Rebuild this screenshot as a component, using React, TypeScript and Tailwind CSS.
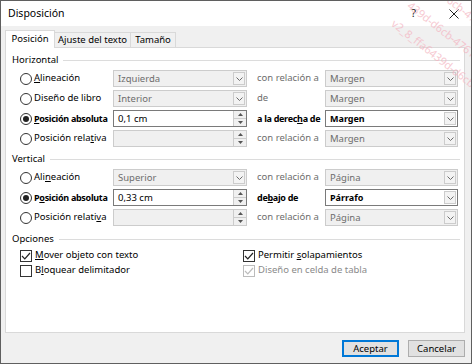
import type { ReactNode } from 'react';

function Chevron() {
  return (
    <svg width="7" height="4" viewBox="0 0 7 4" fill="none">
      <path d="M0.5 0.5 L3.5 3.5 L6.5 0.5" stroke="#6b6b6b" strokeWidth="1" />
    </svg>
  );
}

function Spin() {
  return (
    <span className="flex h-full w-[13px] flex-col border-l border-[#cccccc] bg-[#f0f0f0]">
      <span className="flex flex-1 items-center justify-center border-b border-[#cccccc]">
        <svg width="5" height="3" viewBox="0 0 5 3"><path d="M0 3 L2.5 0 L5 3 Z" fill="#555" /></svg>
      </span>
      <span className="flex flex-1 items-center justify-center">
        <svg width="5" height="3" viewBox="0 0 5 3"><path d="M0 0 L2.5 3 L5 0 Z" fill="#555" /></svg>
      </span>
    </span>
  );
}

function Combo({ value, active, bold }: { value: string; active?: boolean; bold?: boolean }) {
  return (
    <div
      className={
        active
          ? 'flex h-[17px] items-stretch border border-[#7a7a7a] bg-white text-black'
          : 'flex h-[17px] items-stretch border border-[#cccccc] bg-[#f0f0f0] text-[#6d6d6d]'
      }
    >
      <span className={bold ? 'flex-1 pl-[4px] text-[9px] font-bold leading-[15px]' : 'flex-1 pl-[4px] leading-[15px]'}>{value}</span>
      <span className="m-px flex w-[12px] items-center justify-center border border-[#cccccc] bg-[#f3f3f3]">
        <Chevron />
      </span>
    </div>
  );
}

function SpinBox({ value, active }: { value: string; active?: boolean }) {
  return (
    <div
      className={
        active
          ? 'flex h-[17px] items-stretch border border-[#7a7a7a] bg-white text-black'
          : 'flex h-[17px] items-stretch border border-[#cccccc] bg-[#f0f0f0] text-[#6d6d6d]'
      }
    >
      <span className="flex-1 pl-[4px] leading-[15px]">{value}</span>
      <Spin />
    </div>
  );
}

function Radio({ checked }: { checked?: boolean }) {
  return (
    <span className="flex h-[12px] w-[12px] shrink-0 items-center justify-center rounded-full border border-[#333333] bg-white">
      {checked && <span className="h-[6px] w-[6px] rounded-full bg-[#222222]" />}
    </span>
  );
}

function Check({ checked, disabled }: { checked?: boolean; disabled?: boolean }) {
  return (
    <span
      className={
        disabled
          ? 'flex h-[12px] w-[12px] shrink-0 items-center justify-center border border-[#bcbcbc] bg-white'
          : 'flex h-[12px] w-[12px] shrink-0 items-center justify-center border border-[#333333] bg-white'
      }
    >
      {checked && (
        <svg width="10" height="8" viewBox="0 0 10 8" fill="none">
          <path d="M1 4 L3.8 6.8 L9 1" stroke={disabled ? '#bcbcbc' : '#222'} strokeWidth="1.2" />
        </svg>
      )}
    </span>
  );
}

function Group({ title }: { title: string }) {
  return (
    <div className="flex h-[14px] items-center gap-[5px] pl-[6px] pr-[4px]">
      <span className="leading-[14px]">{title}</span>
      <span className="h-px flex-1 bg-[#dcdcdc]" />
    </div>
  );
}

function Row({
  label,
  checked,
  field,
  rel,
  relBold,
  combo,
}: {
  label: ReactNode;
  checked?: boolean;
  field: ReactNode;
  rel: ReactNode;
  relBold?: boolean;
  combo: ReactNode;
}) {
  return (
    <div className="flex h-[17px] items-center pl-[14px]">
      <div className="flex w-[93px] items-center gap-[2px]">
        <Radio checked={checked} />
        <span className={checked ? 'whitespace-nowrap text-[9px] font-bold tracking-[-0.3px]' : 'whitespace-nowrap'}>{label}</span>
      </div>
      <div className="w-[134px]">{field}</div>
      <div
        className={
          relBold
            ? 'w-[78px] whitespace-nowrap pl-[10px] text-[9px] font-bold tracking-[-0.3px]'
            : 'w-[78px] whitespace-nowrap pl-[10px] text-[#6d6d6d]'
        }
      >
        {rel}
      </div>
      <div className="w-[133px]">{combo}</div>
    </div>
  );
}

export default function App() {
  return (
    <div className="relative flex h-[364px] w-[472px] flex-col overflow-hidden border border-[#5f5f5f] bg-[#f0f0f0] font-['Noto_Sans',sans-serif] text-[9.5px] text-black">
      {/* Title bar */}
      <div className="flex h-[25px] items-center bg-white pl-[7px]">
        <span className="flex-1 text-[10.5px]">Disposición</span>
        <span className="mr-[33px] text-[11px] text-[#222]">?</span>
        <svg width="10" height="10" viewBox="0 0 10 10" className="mr-[12px]">
          <path d="M0.5 0.5 L9.5 9.5 M9.5 0.5 L0.5 9.5" stroke="#222" strokeWidth="1" />
        </svg>
      </div>

      {/* Body */}
      <div className="flex flex-1 flex-col px-[4px] pt-[4px]">
        <div className="flex h-[17px] items-end whitespace-nowrap">
          <div className="relative z-10 -mb-px flex h-[18px] w-[50px] items-center justify-center border border-b-0 border-[#d9d9d9] bg-white">
            Posición
          </div>
          <div className="-ml-px flex h-[15px] w-[77px] items-center justify-center border border-b-0 border-[#d9d9d9]">
            Ajuste del texto
          </div>
          <div className="-ml-px flex h-[15px] w-[46px] items-center justify-center border border-b-0 border-[#d9d9d9]">
            Tamaño
          </div>
        </div>

        <div className="flex h-[286px] w-[460px] flex-col border border-[#d9d9d9] bg-white pt-[5px]">
          <Group title="Horizontal" />
          <div className="mt-[3px] flex flex-col gap-[3px]">
            <Row
              label={<><u>A</u>lineación</>}
              field={<Combo value="Izquierda" />}
              rel="con relación a"
              combo={<Combo value="Margen" />}
            />
            <Row
              label="Diseño de libro"
              field={<Combo value="Interior" />}
              rel="de"
              combo={<Combo value="Margen" />}
            />
            <Row
              label={<><u>P</u>osición absoluta</>}
              checked
              field={<SpinBox value="0,1 cm" active />}
              rel={<>a la derec<u>h</u>a de</>}
              relBold
              combo={<Combo value="Margen" active bold />}
            />
            <Row
              label={<>Posición rela<u>t</u>iva</>}
              field={<SpinBox value="" />}
              rel="con relación a"
              combo={<Combo value="Margen" />}
            />
          </div>

          <div className="mt-[5px]">
            <Group title="Vertical" />
          </div>
          <div className="mt-[3px] flex flex-col gap-[3px]">
            <Row
              label={<>Ali<u>n</u>eación</>}
              field={<Combo value="Superior" />}
              rel="con relación a"
              combo={<Combo value="Página" />}
            />
            <Row
              label={<>P<u>o</u>sición absoluta</>}
              checked
              field={<SpinBox value="0,33 cm" active />}
              rel={<>de<u>b</u>ajo de</>}
              relBold
              combo={<Combo value="Párrafo" active bold />}
            />
            <Row
              label={<>Posición relati<u>v</u>a</>}
              field={<SpinBox value="" />}
              rel="con relación a"
              combo={<Combo value="Página" />}
            />
          </div>

          <div className="mt-[6px]">
            <Group title="Opciones" />
          </div>
          <div className="mt-[2px] grid grid-cols-[223px_1fr] pl-[14px]">
            <div className="flex h-[15px] items-center gap-[3px]">
              <Check checked />
              <span><u>M</u>over objeto con texto</span>
            </div>
            <div className="flex h-[15px] items-center gap-[3px]">
              <Check checked />
              <span>Permitir <u>s</u>olapamientos</span>
            </div>
            <div className="flex h-[15px] items-center gap-[3px]">
              <Check />
              <span>B<u>l</u>oquear delimitador</span>
            </div>
            <div className="flex h-[15px] items-center gap-[3px] text-[#8a8a8a]">
              <Check checked disabled />
              <span>Diseño en celda de tabla</span>
            </div>
          </div>
        </div>

        <div className="mt-[7px] flex w-[460px] justify-end gap-[9px]">
          <button className="h-[17px] w-[57px] border border-[#0078d7] bg-[#e1e1e1] text-[9.5px] leading-[15px] shadow-[inset_0_0_0_1px_#0078d7]">
            Aceptar
          </button>
          <button className="h-[17px] w-[57px] border border-[#adadad] bg-[#e1e1e1] text-[9.5px] leading-[15px]">
            Cancelar
          </button>
        </div>
      </div>

      {/* Watermark */}
      <div className="pointer-events-none absolute left-[360px] top-[-30px] h-[180px] w-[200px] text-[11px] leading-[14px] text-[#f4b3c0] opacity-70">
        <div className="absolute left-[32px] top-[44px] origin-left rotate-[38deg] whitespace-nowrap">v2_8_ffa6439d-d6cb-4761-baa3-efdd36</div>
        <div className="absolute left-[48px] top-[26px] origin-left rotate-[38deg] whitespace-nowrap">439d-d6cb-4761-baa3-efdd36a</div>
        <div className="absolute left-[74px] top-[10px] origin-left rotate-[38deg] whitespace-nowrap">d-d6cb-4761-baa3-efdd36</div>
      </div>
    </div>
  );
}
